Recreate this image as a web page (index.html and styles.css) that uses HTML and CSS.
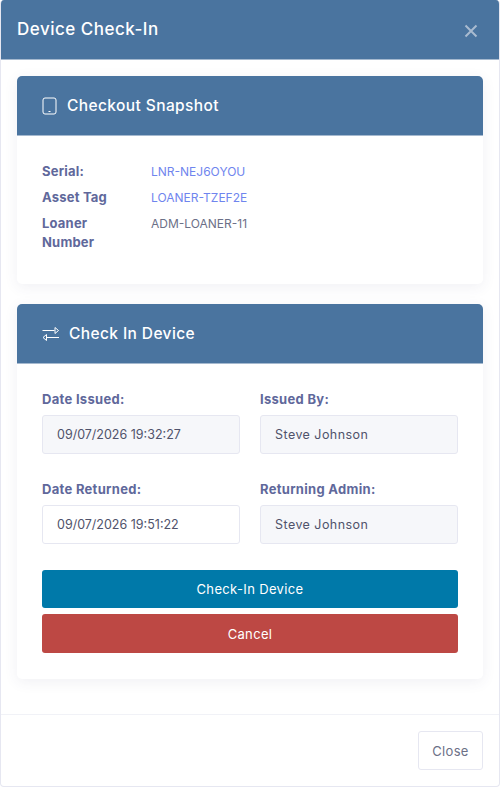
FILE: index.html
```html
<!DOCTYPE html>
<html lang="en">
<head>
    <meta charset="UTF-8">
    <meta name="viewport" content="width=device-width, initial-scale=1.0">
    <title>Device Check-In</title>
    <link rel="stylesheet" href="styles.css">
</head>
<body>
    <div class="modal">
        <div class="modal-header">
            <h1>Device Check-In</h1>
            <svg class="close-x" width="14" height="14" viewBox="0 0 14 14"><path d="M1.5 1.5l11 11M12.500 1.500l-11 11"/></svg>
        </div>
        <div class="modal-body">
            <div class="card">
                <div class="card-header">
                    <svg class="icon" width="16" height="18" viewBox="0 0 16 18"><rect x="1" y="1" width="13" height="16" rx="2"/><path d="M6.500 14.500h2"/></svg>
                    <h2>Checkout Snapshot</h2>
                </div>
                <div class="card-body snapshot">
                    <div class="info-label">Serial:</div>
                    <div class="info-value link">LNR-NEJ6OYOU</div>
                    <div class="info-label">Asset Tag</div>
                    <div class="info-value link">LOANER-TZEF2E</div>
                    <div class="info-label">Loaner Number</div>
                    <div class="info-value">ADM-LOANER-11</div>
                </div>
            </div>
            <div class="card">
                <div class="card-header">
                    <svg class="icon" width="18" height="16" viewBox="0 0 18 16"><path d="M0.500 4.500h12M13 1.500l3.500 3-3.500 3zM17 11.500h-12M4.500 8.500l-3.500 3 3.500 3z"/></svg>
                    <h2>Check In Device</h2>
                </div>
                <div class="card-body">
                    <div class="form-grid">
                        <div class="field">
                            <label>Date Issued:</label>
                            <div class="input readonly">09/07/2026 19:32:27</div>
                        </div>
                        <div class="field">
                            <label>Issued By:</label>
                            <div class="input readonly name">Steve Johnson</div>
                        </div>
                        <div class="field">
                            <label>Date Returned:</label>
                            <div class="input">09/07/2026 19:51:22</div>
                        </div>
                        <div class="field">
                            <label>Returning Admin:</label>
                            <div class="input readonly name">Steve Johnson</div>
                        </div>
                    </div>
                    <button class="btn btn-primary">Check-In Device</button>
                    <button class="btn btn-danger">Cancel</button>
                </div>
            </div>
        </div>
        <div class="modal-footer">
            <button class="btn-close">Close</button>
        </div>
    </div>
</body>
</html>
```

FILE: styles.css
```css
* {
    box-sizing: border-box;
}
body {
    margin: 0;
    font-family: Inter, "Open Sans", sans-serif;
    background-color: #fff;
    color: #50536b;
}
.modal {
    height: 787px;
    background-color: #fff;
    border: 1px solid #e6e7f1;
    border-top: none;
    border-radius: 4px;
    display: flex;
    flex-direction: column;
    overflow: hidden;
}
.modal-header {
    height: 60px;
    padding: 0 16px;
    background-color: #4a749f;
    border-bottom: 1px solid #a5b9cf;
    display: flex;
    align-items: center;
    justify-content: space-between;
}
.modal-header h1 {
    margin: 0 0 2px;
    font-size: 17px;
    font-weight: 500;
    letter-spacing: 0.5px;
    color: #fff;
}
.close-x {
    margin: 2px 5px 0 0;
}
.close-x path {
    fill: none;
    stroke: #a9bbd0;
    stroke-width: 2;
}
.modal-body {
    flex: 1;
    padding: 16px 16px 0;
}
.card {
    background-color: #fff;
    border-radius: 5px;
    box-shadow: 0 3px 14px rgba(60, 70, 110, 0.08);
    margin-bottom: 20px;
    overflow: hidden;
}
.card-header {
    height: 60px;
    padding: 0 25px;
    background-color: #4a749f;
    border-bottom: 1px solid #a5b9cf;
    display: flex;
    align-items: center;
    gap: 9px;
}
.card-header h2 {
    margin: 0;
    font-size: 15.500px;
    font-weight: 500;
    letter-spacing: 0.4px;
    color: #fff;
}
.icon {
    flex: none;
}
.icon rect, .icon path {
    fill: none;
    stroke: #fff;
    stroke-width: 1;
}
.card-body {
    padding: 26px 25px;
}
.snapshot {
    display: grid;
    grid-template-columns: 109px 1fr;
    row-gap: 7px;
    padding: 26px 25px 32px;
    font-size: 12px;
    line-height: 19px;
}
.info-label {
    font-size: 13px;
    font-weight: 700;
    letter-spacing: 0.2px;
    color: #60689b;
    padding-right: 30px;
}
.info-value {
    color: #6c7087;
}
.link {
    color: #6f85ee;
}
.form-grid {
    display: grid;
    grid-template-columns: 1fr 1fr;
    column-gap: 20px;
    row-gap: 26px;
    margin-bottom: 26px;
}
.field label {
    display: block;
    margin-bottom: 7px;
    font-size: 13px;
    line-height: 18px;
    font-weight: 700;
    letter-spacing: 0.3px;
    color: #60689b;
}
.input {
    height: 39px;
    padding: 0 14px;
    border: 1px solid #e6e7f1;
    border-radius: 3px;
    background-color: #fff;
    font-size: 12.500px;
    line-height: 37px;
    color: #50536b;
}
.name {
    letter-spacing: 0.45px;
}
.readonly {
    background-color: #f6f7fa;
}
.btn {
    display: block;
    width: 100%;
    height: 39px;
    border: none;
    border-radius: 3px;
    font-family: inherit;
    font-size: 13px;
    letter-spacing: 0.35px;
    color: #fff;
}
.btn-primary {
    height: 38px;
    background-color: #0079a9;
    margin-bottom: 6px;
}
.btn-danger {
    background-color: #bd4844;
}
.modal-footer {
    height: 72px;
    padding: 16px;
    border-top: 1px solid #f1f2f7;
    display: flex;
    justify-content: flex-end;
    margin-top: auto;
}
.btn-close {
    width: 65px;
    height: 39px;
    border: 1px solid #e6e7f1;
    border-radius: 3px;
    background-color: #fff;
    font-family: inherit;
    font-size: 13px;
    letter-spacing: 0.3px;
    color: #6c7087;
}
```
